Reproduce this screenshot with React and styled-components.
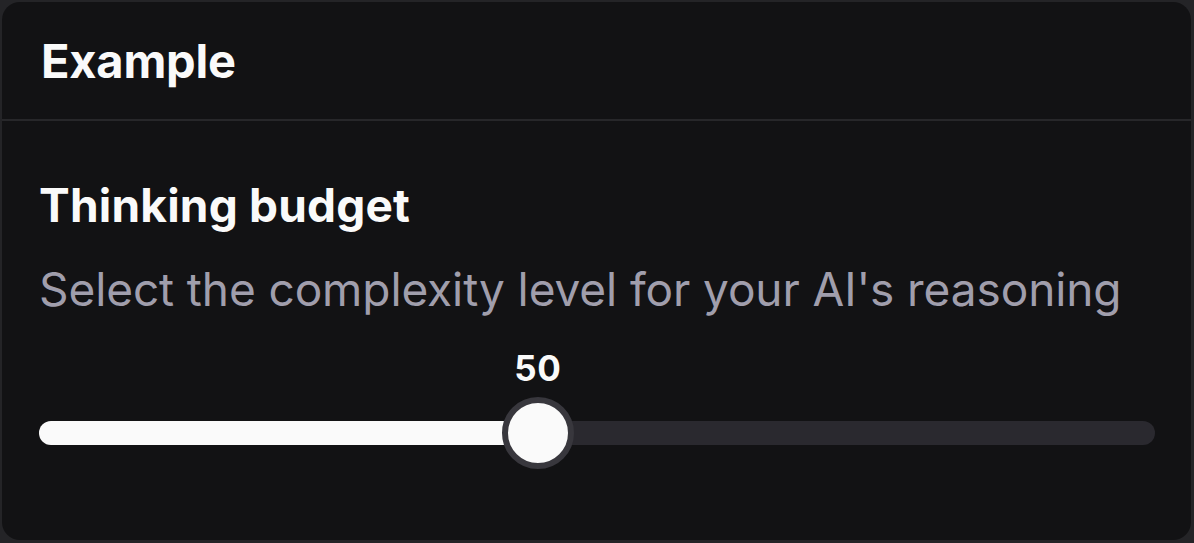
import React from "react";
import styled, { createGlobalStyle } from "styled-components";

const Global = createGlobalStyle`
  html, body { margin: 0; padding: 0; background: #242427; }
  body { font-family: Inter, "Noto Sans", sans-serif; -webkit-font-smoothing: antialiased; }
`;

const Page = styled.div`
  width: 1194px;
  height: 543px;
  padding: 2px 3px 3px 2px;
  box-sizing: border-box;
  display: flex;
`;

const Card = styled.div`
  flex: 1;
  background: #121214;
  border-radius: 18px;
  display: flex;
  flex-direction: column;
  overflow: hidden;
`;

const Header = styled.div`
  height: 119px;
  box-sizing: border-box;
  border-bottom: 2px solid #27272a;
  display: flex;
  align-items: center;
  padding: 0 39px;
`;

const Title = styled.h1`
  margin: 0;
  font-size: 47px;
  font-weight: 700;
  color: #fafafa;
  letter-spacing: -0.2px;
`;

const Body = styled.div`
  padding: 58px 36px 0 37px;
  display: flex;
  flex-direction: column;
`;

const Label = styled.h2`
  margin: 0;
  font-size: 46px;
  line-height: 52px;
  font-weight: 700;
  color: #fafafa;
  letter-spacing: 0.2px;
`;

const Description = styled.p`
  margin: 33px 0 0 0;
  font-size: 46px;
  line-height: 50px;
  font-weight: 400;
  color: #a09eac;
  letter-spacing: -0.1px;
  white-space: nowrap;
`;

const SliderWrap = styled.div`
  position: relative;
  margin-top: 34px;
  height: 110px;
`;

const ValueLabel = styled.div`
  position: absolute;
  top: 0;
  transform: translateX(-50%);
  font-size: 35px;
  line-height: 40px;
  font-weight: 700;
  color: #fafafa;
  letter-spacing: 0.5px;
`;

const Track = styled.div`
  position: absolute;
  left: 0;
  right: 0;
  top: 73px;
  height: 24px;
  border-radius: 12px;
  background: #2a292f;
`;

const Fill = styled.div`
  height: 100%;
  border-radius: 12px;
  background: #fafafa;
`;

const Thumb = styled.div`
  position: absolute;
  top: 49px;
  width: 60px;
  height: 60px;
  border-radius: 50%;
  background: #fafafa;
  border: 6px solid #38373d;
  transform: translateX(-50%);
`;

export default function App() {
  const value = 50;
  const pct = "44.7%";
  return (
    <>
      <Global />
      <Page>
        <Card>
          <Header>
            <Title>Example</Title>
          </Header>
          <Body>
            <Label>Thinking budget</Label>
            <Description>Select the complexity level for your AI's reasoning</Description>
            <SliderWrap>
              <ValueLabel style={{ left: pct }}>{value}</ValueLabel>
              <Track>
                <Fill style={{ width: pct }} />
              </Track>
              <Thumb style={{ left: pct }} />
            </SliderWrap>
          </Body>
        </Card>
      </Page>
    </>
  );
}
